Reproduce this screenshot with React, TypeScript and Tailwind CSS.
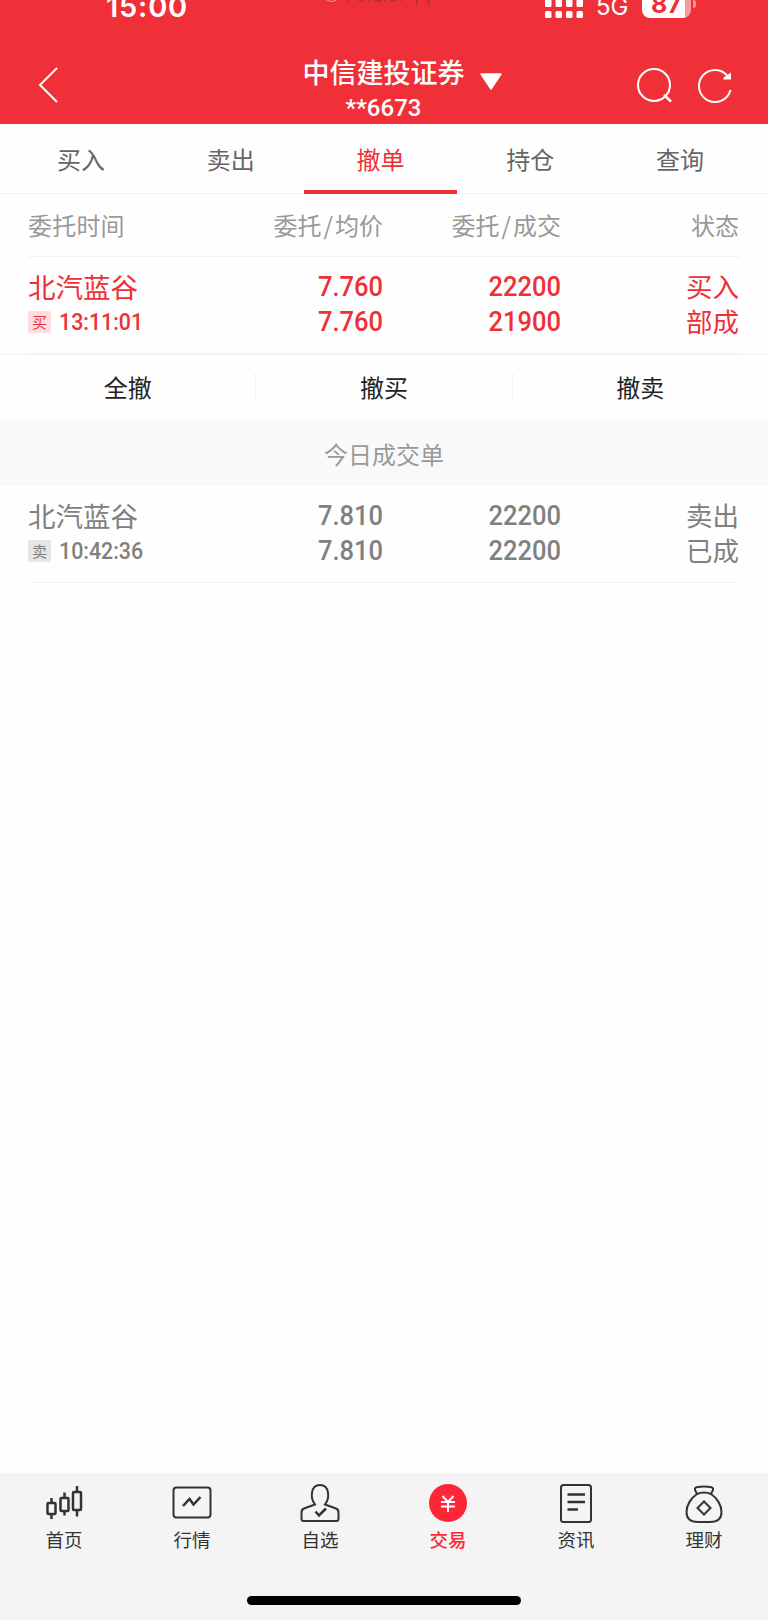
import React from 'react';
import { clsx } from 'clsx';

const tabs = ['买入', '卖出', '撤单', '持仓', '查询'];

interface Order {
  name: string;
  side: string;
  time: string;
  price: string;
  avg: string;
  qty: string;
  filled: string;
  action: string;
  status: string;
  active: boolean;
}

const pending: Order = {
  name: '北汽蓝谷', side: '买', time: '13:11:01', price: '7.760', avg: '7.760',
  qty: '22200', filled: '21900', action: '买入', status: '部成', active: true,
};

const done: Order = {
  name: '北汽蓝谷', side: '卖', time: '10:42:36', price: '7.810', avg: '7.810',
  qty: '22200', filled: '22200', action: '卖出', status: '已成', active: false,
};

const StatusBar: React.FC = () => (
  <div className="relative h-[34px] overflow-hidden">
    <span className="absolute left-[106px] -top-[10px] font-['Inter'] text-[29px] leading-[34px] font-semibold tracking-[0.8px]">15:00</span>
    <span className="absolute left-[322px] -top-[20px] text-[19px] leading-6 whitespace-nowrap text-[#a83237]"><span className="text-[#f9a3a7]">◉</span> 同花顺App</span>
    <svg className="absolute left-[544px] top-0" width="42" height="19" fill="currentColor">
      {[1, 11.5, 22, 32.5].map((x) => (
        <React.Fragment key={x}>
          <rect x={x} y="-1" width="6.5" height="8" rx="1.5" />
          <rect x={x} y="11" width="6.5" height="7" rx="1.5" />
        </React.Fragment>
      ))}
    </svg>
    <span className="absolute left-[596px] -top-[9px] font-['Inter'] text-[24px] leading-8">5G</span>
    <div className="absolute left-[642px] -top-[9px] flex h-[27px] w-[49px] justify-center rounded-[8px] bg-[linear-gradient(90deg,#fff_88%,#f79a9e_88%)]">
      <span className="font-['Inter'] text-[25px] leading-[26px] font-bold text-[#ef3038]">87</span>
    </div>
    <div className="absolute left-[693px] top-0 h-2 w-[3px] rounded-r-full bg-[#f79a9e]" />
  </div>
);

const Header: React.FC = () => (
  <header className="h-[124px] bg-[#f03038] text-white">
    <StatusBar />
    <div className="flex h-[90px] items-start">
      <svg className="ml-[37px] mt-[32px]" width="24" height="38" fill="none" stroke="currentColor" strokeWidth="2">
        <path d="M20 2L3 19L20 36" />
      </svg>
      <div className="ml-[241px] w-[163px] pt-[19px] text-center">
        <div className="text-[27px] leading-[38px] font-medium whitespace-nowrap">中信建投证券</div>
        <div className="mt-[3px] font-['Roboto'] text-[24px] leading-7 font-medium">**6673</div>
      </div>
      <svg className="ml-[14px] mt-[38px]" width="24" height="20" fill="currentColor">
        <path d="M2 2H22L12 17Z" stroke="currentColor" strokeWidth="1.5" strokeLinejoin="round" />
      </svg>
      <svg className="ml-[133px] mt-[31px]" width="40" height="40" fill="none" stroke="currentColor" strokeWidth="2">
        <circle cx="18" cy="20" r="16" />
        <path d="M28 30L35 36.5" strokeWidth="2.5" />
      </svg>
      <svg className="ml-[21px] mt-[31px]" width="40" height="40" fill="none" stroke="currentColor" strokeWidth="2">
        <path d="M30.5 11A16 16 0 1 0 33.5 25" />
        <path d="M34 7.5V14.5H26.5V12.5L29 11Z" fill="currentColor" stroke="none" />
      </svg>
    </div>
  </header>
);

const Badge: React.FC<{ order: Order }> = ({ order }) => (
  <span className={clsx('flex h-[22px] w-[23px] items-center justify-center rounded-[2px] pb-px text-[15px] leading-none', order.active ? 'bg-[#fddddf]' : 'bg-[#e6e6e6]')}>
    {order.side}
  </span>
);

const OrderRow: React.FC<{ order: Order }> = ({ order }) => {
  const num = "origin-right scale-x-[0.91] font-['Roboto'] font-medium text-[28px] leading-[35px] text-right";
  return (
    <div className={clsx('mx-7 flex h-[97px] border-b border-[#f3f3f3] pt-[12px]', order.active ? 'text-[#ee3036]' : 'text-[#808080]')}>
      <div className="w-[200px]">
        <div className="text-[27.5px] leading-[35px]">{order.name}</div>
        <div className="mt-[6px] flex items-center">
          <Badge order={order} />
          <span className="ml-[8px] origin-left scale-x-[0.89] font-['Roboto'] text-[24px] leading-[24px] font-medium">{order.time}</span>
        </div>
      </div>
      <div className={clsx('w-[155px]', num)}>
        <div>{order.price}</div>
        <div>{order.avg}</div>
      </div>
      <div className={clsx('w-[178px]', num)}>
        <div>{order.qty}</div>
        <div>{order.filled}</div>
      </div>
      <div className="-mt-px flex-1 pr-px text-right text-[26.5px] leading-[35px]">
        <div>{order.action}</div>
        <div>{order.status}</div>
      </div>
    </div>
  );
};

const navIcons: Record<string, React.ReactNode> = {
  首页: (
    <g strokeWidth="2.5">
      <rect x="3.5" y="19" width="8" height="11" rx="1" />
      <path d="M7.5 14V19M7.5 30V35M20.5 8.5V14M20.5 27V31.5M33 2V8M33 26V32.5" />
      <rect x="16.5" y="14" width="8" height="13" rx="1" />
      <rect x="29" y="8" width="8" height="18" rx="1" />
    </g>
  ),
  行情: (
    <>
      <rect x="1.5" y="3.5" width="37" height="30" rx="3" />
      <path d="M11 22L17.5 15L21.5 20.5L28.5 13" strokeWidth="2.5" />
    </>
  ),
  自选: (
    <>
      <path d="M15 20.5C10 14 10.500 1 20 1S30 14 25 20.5L36 24.5Q38.500 25.5 38.500 28.5V35Q38.500 37 36.5 37H3.5Q1.5 37 1.5 35V28.5Q1.5 25.5 4 24.5L15 20.5Z" />
      <path d="M15.5 27.5L19 31.5L26 24.5" strokeWidth="2.5" />
    </>
  ),
  交易: (
    <>
      <circle cx="20" cy="19" r="19" fill="#ff2638" stroke="none" />
      <path d="M14.5 12L20 18L25.5 12M13 18H27M13 22.5H27M20 18V28" stroke="#fff" />
    </>
  ),
  资讯: (
    <>
      <rect x="5" y="1" width="30" height="37" rx="2.5" />
      <path d="M11.5 10.5H29M11.5 18H29M11.5 25.5H22" strokeWidth="2.5" />
    </>
  ),
  理财: (
    <>
      <path d="M13 10L11 6Q10.500 3.5 13.500 3Q20 2 26.500 3Q29.500 3.5 29 6L27 10Q20 7 13 10ZM13 10C7 14 2.500 21 2.500 28Q2.500 38 14 38H26Q37.500 38 37.500 28C37.500 21 33 14 27 10" />
      <path d="M20 17.5L26.5 24L20 30.5L13.5 24Z" />
    </>
  ),
};

const BottomNav: React.FC = () => (
  <nav className="mt-auto flex h-[147px] flex-col bg-[#f4f4f4]">
    <div className="flex pt-[11px]">
      {Object.keys(navIcons).map((label) => (
        <div key={label} className={clsx('flex flex-1 flex-col items-center', label === '交易' ? 'font-medium text-[#ff2638]' : 'text-[#333]')}>
          <svg width="40" height="40" fill="none" stroke="currentColor" strokeWidth="2">{navIcons[label]}</svg>
          <span className="mt-[2px] text-[18.5px] leading-[27px]">{label}</span>
        </div>
      ))}
    </div>
    <div className="mx-auto mt-auto mb-[15px] h-[9px] w-[274px] rounded-full bg-black" />
  </nav>
);

export default function App() {
  return (
    <div className="flex h-[1620px] w-[768px] flex-col overflow-hidden bg-[#fefefe] font-['Noto_Sans_CJK_SC',sans-serif]">
      <Header />

      <div className="flex h-[70px] border-b border-[#f2f2f2] pr-[13px] pl-[6px] text-[24px] leading-[69px]">
        {tabs.map((tab) => (
          <div key={tab} className={clsx('relative flex-1 text-center', tab === '撤单' ? 'text-[#ee3036]' : 'text-[#666]')}>
            {tab}
            {tab === '撤单' && <div className="absolute -inset-x-[2px] -bottom-px h-[4px] bg-[#ee3036]" />}
          </div>
        ))}
      </div>

      <div className="mx-7 flex h-[63px] border-b border-[#f2f2f2] text-[24px] leading-[62px] text-[#999]">
        <div className="w-[200px] tracking-[0.2px]">委托时间</div>
        <div className="w-[155px] text-right">委托<span className="mx-[2px]">/</span>均价</div>
        <div className="w-[178px] text-right">委托<span className="mx-[2px]">/</span>成交</div>
        <div className="flex-1 pr-px text-right">状态</div>
      </div>

      <OrderRow order={pending} />

      <div className="flex h-[67px] items-center border-t border-[#f3f3f3] pb-[2px] text-[24px] text-[#222]">
        <div className="flex-1 text-center">全撤</div>
        <div className="flex-1 border-x border-[#f2f2f2] text-center leading-7">撤买</div>
        <div className="flex-1 text-center">撤卖</div>
      </div>

      <div className="h-[65px] bg-[#f9f9f9] text-center text-[24px] leading-[65px] text-[#999]">今日成交单</div>

      <OrderRow order={done} />

      <BottomNav />
    </div>
  );
}
